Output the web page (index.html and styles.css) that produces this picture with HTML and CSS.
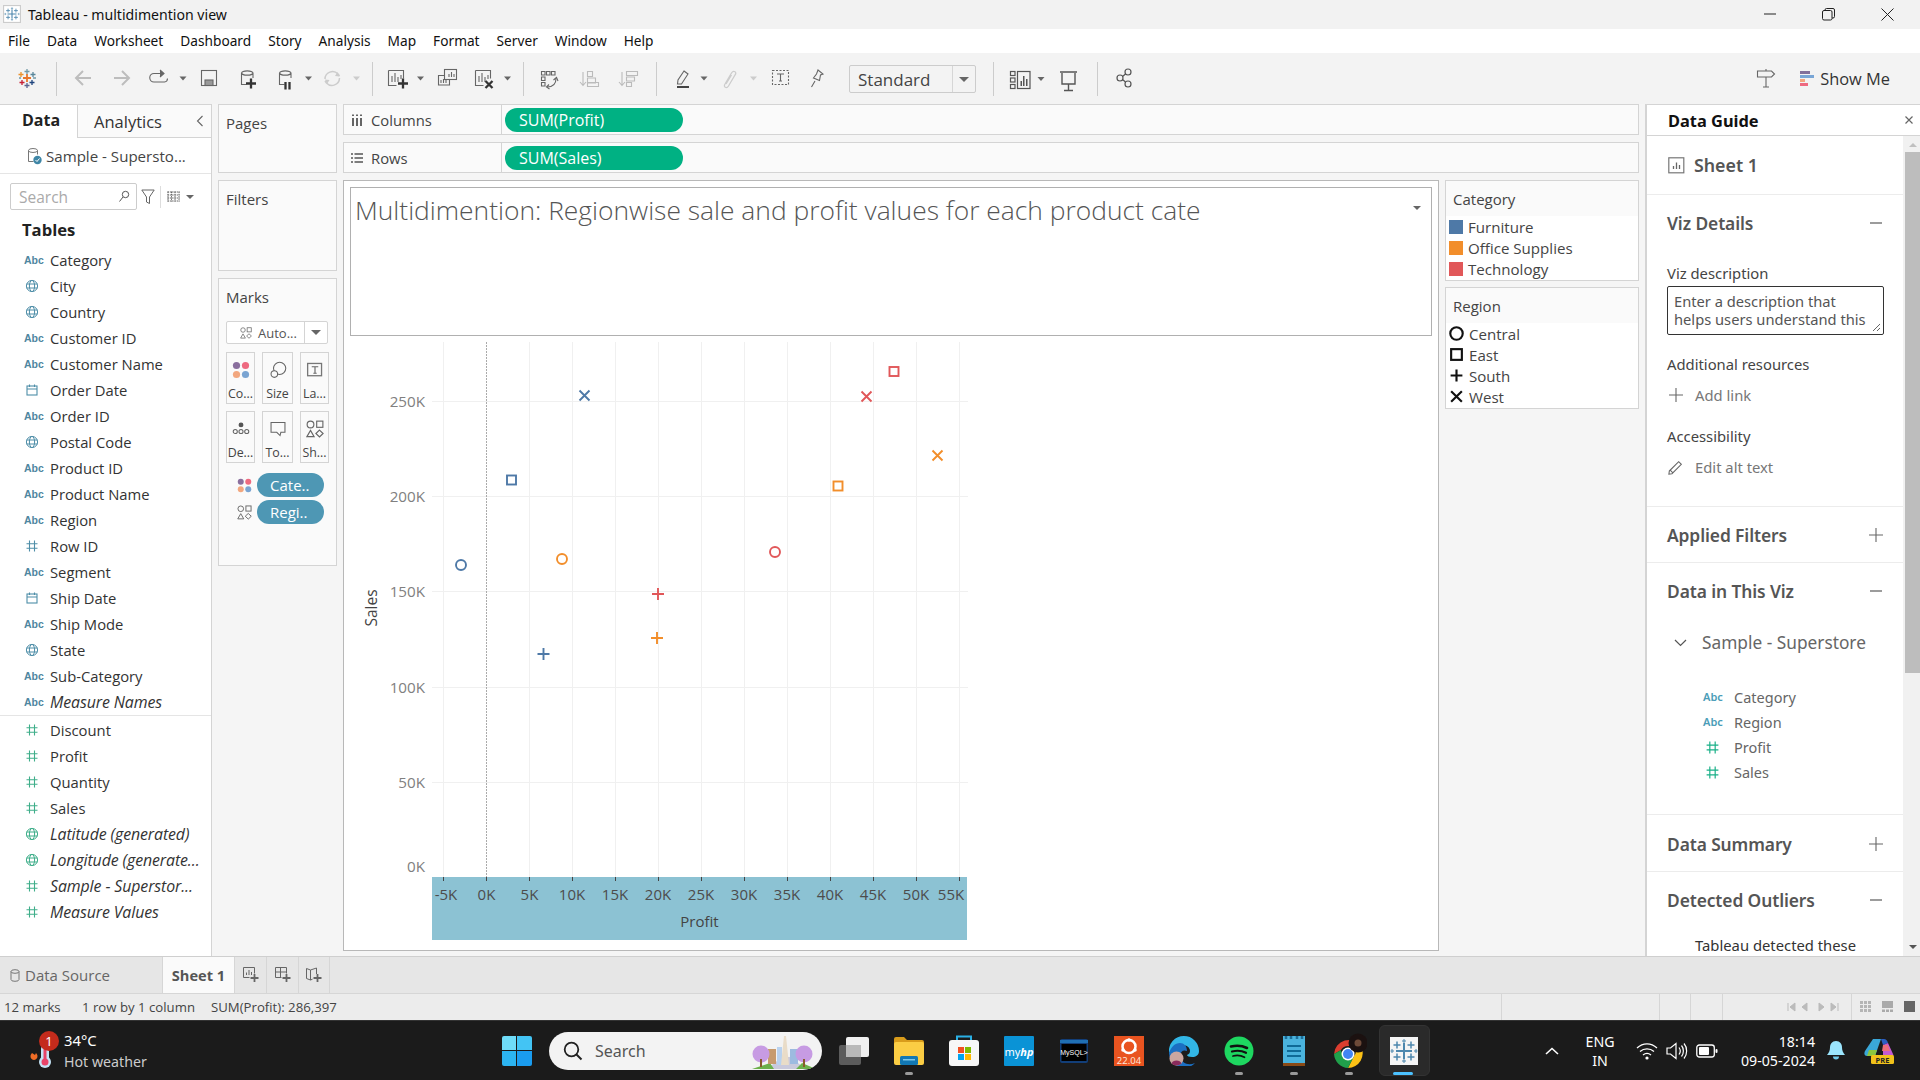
FILE: index.html
```html
<!DOCTYPE html>
<html lang="en">
<head>
<meta charset="utf-8">
<title>Tableau - multidimention view</title>
<link rel="stylesheet" href="styles.css">
</head>
<body>
<svg class="defs" width="0" height="0">
  <symbol id="i-globe" viewBox="0 0 14 14"><g fill="none" stroke="currentColor" stroke-width="1"><circle cx="7" cy="7" r="5.6"/><ellipse cx="7" cy="7" rx="2.6" ry="5.6"/><path d="M1.6 5h10.8M1.6 9h10.8"/></g></symbol>
  <symbol id="i-hash" viewBox="0 0 14 14"><path d="M4.5 1.5v11M9.5 1.5v11M1.5 4.8h11M1.5 9.2h11" fill="none" stroke="currentColor" stroke-width="1.1"/></symbol>
  <symbol id="i-cal" viewBox="0 0 14 14"><g fill="none" stroke="currentColor" stroke-width="1.1"><rect x="2" y="3" width="10" height="9"/><path d="M2 6h10M4.5 1.5V4M9.5 1.5V4"/></g></symbol>
  <symbol id="i-plus" viewBox="0 0 16 16"><path d="M8 1v14M1 8h14" fill="none" stroke="currentColor" stroke-width="1.1"/></symbol>
  <symbol id="i-minus" viewBox="0 0 16 16"><path d="M2 8h12" fill="none" stroke="currentColor" stroke-width="1.3"/></symbol>
  <symbol id="i-colors" viewBox="0 0 16 16"><circle cx="4" cy="4" r="3.2" fill="#8a6f9e"/><circle cx="12" cy="4" r="3.2" fill="#ee6a80"/><circle cx="4" cy="12" r="3.2" fill="#f2a77f"/><circle cx="12" cy="12" r="3.2" fill="#7aa4d2"/></symbol>
  <symbol id="i-shapes" viewBox="0 0 16 16"><g fill="none" stroke="#666" stroke-width="1"><circle cx="4" cy="4" r="3"/><rect x="9.5" y="1" width="5.5" height="5.5"/><path d="M4 9.2l3.2 5.6H.8z"/><path d="M12 9l3.2 3-3.2 3-3.2-3z"/></g></symbol>
  <symbol id="i-tableau" viewBox="0 0 28 28"><g fill="none" stroke="#4d87ad"><path d="M14 6v16M6 14h16" stroke-width="2"/><path d="M7 4.500v7M3.500 8h7M21 4.500v7M17.500 8h7M7 16.500v7M3.500 20h7M21 16.500v7M17.500 20h7" stroke-width="1.500"/><path d="M14 2v4M12 4h4M14 22v4M12 24h4M2 12v4M0.500 14h3.500M26 12v4M24 14h3.500" stroke-width="1"/></g></symbol>
</svg>

<div class="app">
  <header class="titlebar">
    <svg class="tb-logo" width="18" height="18" viewBox="-2 -2 32 32"><rect x="-1" y="-1" width="30" height="30" fill="#fff" stroke="#ccc" stroke-width="2"/><use href="#i-tableau" width="28" height="28"/></svg>
    <span class="tb-title">Tableau - multidimention view</span>
    <div class="win-btns">
      <svg width="12" height="12" viewBox="0 0 12 12"><path d="M0 6h12" stroke="#222" stroke-width="1"/></svg>
      <svg width="13" height="13" viewBox="0 0 13 13"><g fill="none" stroke="#222" stroke-width="1"><rect x="0.500" y="2.500" width="9.500" height="9.500" rx="1.500"/><path d="M3 2.500V2a1.500 1.500 0 0 1 1.500-1.500h6.500a1.500 1.500 0 0 1 1.500 1.500v6.500a1.500 1.500 0 0 1-1.500 1.500H10"/></g></svg>
      <svg width="13" height="13" viewBox="0 0 13 13"><path d="M.5.500l12 12M12.500.500l-12 12" stroke="#222" stroke-width="1"/></svg>
    </div>
  </header>

  <nav class="menubar">
    <span>File</span><span>Data</span><span>Worksheet</span><span>Dashboard</span><span>Story</span><span>Analysis</span><span>Map</span><span>Format</span><span>Server</span><span>Window</span><span>Help</span>
  </nav>

  <div class="toolbar">
    <svg class="tool-a" width="849" height="51" viewBox="0 0 849 51">
      <g stroke-width="1.300" fill="none">
        <path d="M27 16v5M24.500 18.500h5" stroke="#7199a6"/><path d="M27 21v8M23 25h8" stroke="#e8762b" stroke-width="1.800"/><path d="M27 30v5M24.500 32.500h5" stroke="#5b6591"/>
        <path d="M21 19v5M18.500 21.500h5" stroke="#eb912b"/><path d="M33 19v5M30.500 21.500h5" stroke="#59879b"/><path d="M22 27v5M19.500 29.500h5" stroke="#c72035"/><path d="M32 27v5M29.500 29.500h5" stroke="#1f457e"/><path d="M19 25h2M33 25h3" stroke="#7199a6"/>
      </g>
      <path class="sep" d="M56.500 9v34M372.500 9v34M523.500 9v34M656.500 9v34"/>
      <g fill="none" stroke="#bdbdbd" stroke-width="2"><path d="M91 25H76M83 18l-7 7 7 7"/><path d="M114 25h15M122 18l7 7-7 7"/></g>
      <g fill="none" stroke="#666" stroke-width="1.100">
        <path d="M163 20.500h-9a3.500 3.500 0 0 0 0 8.500h10.500a3.500 3.500 0 0 0 3-3.500"/><path d="M160 17l4 3.500-4 3.500" fill="#666"/>
        <rect x="201.500" y="17.500" width="15" height="15"/><rect x="205" y="27" width="8" height="5.500" fill="#999"/>
        <path d="M241.500 20v11.500h5M253 20v5M241.500 20a5.800 2.500 0 0 1 11.500 0 5.800 2.500 0 0 1-11.500 0"/>
        <path d="M279.500 20v11.500h5M291 20v5M279.500 20a5.800 2.500 0 0 1 11.500 0 5.800 2.500 0 0 1-11.500 0"/>
        <path d="M388.500 17.500h15v8M388.500 17.500v15h8M392 29v-6M395 29v-9M398 29v-5M401 26v-4"/>
        <rect x="444.500" y="16.500" width="12" height="10" fill="#f3f3f3"/><path d="M449 24v-3M451.500 24v-5M454 24v-3"/><path d="M444 22.500h-5.500v9.500h11v-5M441 30v-3M443.500 30v-4M446 30v-3"/>
        <path d="M475.500 17.500h15v8M475.500 17.500v15h8M479 29v-6M482 29v-9M485 29v-5M488 26v-4"/>
        <path d="M541.500 18.500h3.500v3.500h-3.500zM546.500 18.500h3.500v3.500h-3.500zM551.500 18.500h3.500v3.500h-3.500zM541.500 24h3.500v3.500h-3.500zM541.500 29.500h3.500v3.500h-3.500zM556 25.500c0 5-3 8.500-9 8.500"/><path d="M553.500 27l3-2.500 1.500 3.500M549 31.500l-2.500 2.500 3 2" />
        <g stroke="#bbb"><path d="M583 19v13M580 29l3 3.500 3-3.500" /><path d="M587.500 18.500h5v5h-5zM587.500 25h8v5h-8zM587.500 29.500h11v4h-11z"/><path d="M622 19v13M619 29l3 3.500 3-3.500"/><path d="M626.500 18.500h11v4h-11zM626.500 24h8v4h-8zM626.500 29.500h5v4h-5z"/></g>
        <path d="M684 18l4 3-6.500 10h-4l.5-4z"/>
        <g stroke="#ccc" stroke-width="1.300"><path d="M735 22l-6.500 11c-2 3-5.500 1-3.500-2l6.500-11c2-3 6-1 3.500 2zM731.500 22l-5.500 9"/></g>
        <rect x="772.500" y="17.500" width="16" height="14" stroke-dasharray="2 1.500"/><path d="M777 21h7M780.500 21v7M779 28h3"/>
        <path d="M811.500 34l3.500-6M818 17l5 4-2.500 1-1 5.500-6-2.500 3-4z"/>
      </g>
      <path d="M179.500 23.500h7l-3.500 4zM305 23.500h7l-3.500 4zM417 23.500h7l-3.500 4zM504 23.500h7l-3.500 4zM700.500 23.500h7l-3.500 4z" fill="#666"/>
      <path d="M353 23.500h7l-3.500 4zM750 23.500h7l-3.500 4z" fill="#ccc"/>
      <g fill="none" stroke="#ccc" stroke-width="1.500"><path d="M325 26a7.500 7.500 0 0 1 13-5l1.500 2M339.500 25a7.500 7.500 0 0 1-13 5l-1.500-2"/></g>
      <path d="M337.500 19l2 4.500-4.500-.5zM327 31l-2-4.500 4.500.500z" fill="#ccc"/>
      <g stroke="#333" stroke-width="2.300" fill="none"><path d="M251 25.500v10M246 30.500h10M398 30.500h10M403 25.500v10"/><path d="M285.500 29v7.500M289.500 29v7.500"/><path d="M485.500 28l7 7M492.500 28l-7 7"/></g>
      <rect x="677" y="33" width="12" height="2" fill="#444"/>
    </svg>
    <div class="std-select"><span class="std-text">Standard</span><span class="std-caret"><i class="caret"></i></span></div>
    <svg class="tool-b" width="164" height="51" viewBox="976 0 164 51">
      <path class="sep" d="M993.500 9v34M1097.500 9v34"/>
      <g fill="none" stroke="#555" stroke-width="1.200">
        <rect x="1010.500" y="18.500" width="4.500" height="4"/><rect x="1010.500" y="25" width="4.500" height="4"/><rect x="1010.500" y="31.500" width="4.500" height="4"/><rect x="1017.500" y="18.500" width="12.500" height="17"/>
        <path d="M1060 19h17M1062 20v11h13V20M1068.500 31v6M1064 37.500h9" stroke-width="1.400"/>
        <circle cx="1128" cy="19" r="3"/><circle cx="1120" cy="25" r="3"/><circle cx="1128" cy="31" r="3"/><path d="M1122.500 23.500l3-2.500M1122.500 26.500l3 2.500"/>
      </g>
      <path d="M1020.500 33v-5h1.500v5zM1023 33v-10h1.500v10zM1026 33v-7h1.500v7z" fill="#555" />
      <path d="M1037.500 24h7l-3.500 4z" fill="#666"/>
    </svg>
    <div class="tool-right">
      <svg width="20" height="20" viewBox="0 0 20 20"><g fill="none" stroke="#666" stroke-width="1.100"><path d="M1.500 3h14l3 3-3 3h-14zM10 1v2M10 9v10M7 19h6"/></g></svg>
      <div class="showme">
        <svg width="14" height="17" viewBox="0 0 14 17"><rect width="10" height="3" y="1" fill="#81709b"/><rect width="14" height="3" y="5" fill="#79a6d6"/><rect width="5" height="3" y="9" fill="#f2a77f"/><rect width="8" height="3" y="13" fill="#ee6a80"/></svg>
        <span>Show Me</span>
      </div>
    </div>
  </div>

  <main class="workspace">
    <aside class="data-pane">
      <div class="pane-tabs">
        <div class="tab-data">Data</div>
        <div class="tab-analytics"><span>Analytics</span><svg width="8" height="12" viewBox="0 0 8 12"><path d="M6.500 1L1.500 6l5 5" fill="none" stroke="#666" stroke-width="1.100"/></svg></div>
      </div>
      <div class="source">
        <svg width="15" height="18" viewBox="0 0 15 18"><g fill="none" stroke="#777" stroke-width="1"><path d="M1.500 3.500v11h5M10.500 3.500v4M1.500 3.500a4.500 2 0 0 1 9 0 4.500 2 0 0 1-9 0"/></g><circle cx="10.500" cy="13" r="4.200" fill="#3f86a6"/><path d="M8.500 13l1.500 1.500 2.500-3" fill="none" stroke="#fff"/></svg>
        <span>Sample - Supersto...</span>
      </div>
      <div class="search-row">
        <div class="search-box"><span>Search</span><svg width="12" height="13" viewBox="0 0 12 13"><g fill="none" stroke="#555"><circle cx="7.500" cy="4.500" r="3.200"/><path d="M5 7l-3.500 4.500"/></g></svg></div>
        <svg class="funnel" width="14" height="16" viewBox="0 0 14 16"><path d="M.8 1h12.400L8.500 8v6.500l-3-1.500V8z" fill="none" stroke="#666"/></svg>
        <i class="v-div"></i>
        <svg width="13" height="12" viewBox="0 0 13 12"><path d="M.5 1h12M.5 4h12M.5 7h12M.5 10h12M1 .5v10M4.500 .5v10M8 .5v10M12 .5v10" stroke="#666" stroke-width="1" stroke-dasharray="1.500 .8"/></svg>
        <i class="caret small"></i>
      </div>
      <h3 class="tables-h">Tables</h3>
      <ul class="fields">
        <li><b class="abc">Abc</b><span>Category</span></li>
        <li><svg class="ic dim"><use href="#i-globe"/></svg><span>City</span></li>
        <li><svg class="ic dim"><use href="#i-globe"/></svg><span>Country</span></li>
        <li><b class="abc">Abc</b><span>Customer ID</span></li>
        <li><b class="abc">Abc</b><span>Customer Name</span></li>
        <li><svg class="ic dim"><use href="#i-cal"/></svg><span>Order Date</span></li>
        <li><b class="abc">Abc</b><span>Order ID</span></li>
        <li><svg class="ic dim"><use href="#i-globe"/></svg><span>Postal Code</span></li>
        <li><b class="abc">Abc</b><span>Product ID</span></li>
        <li><b class="abc">Abc</b><span>Product Name</span></li>
        <li><b class="abc">Abc</b><span>Region</span></li>
        <li><svg class="ic dim"><use href="#i-hash"/></svg><span>Row ID</span></li>
        <li><b class="abc">Abc</b><span>Segment</span></li>
        <li><svg class="ic dim"><use href="#i-cal"/></svg><span>Ship Date</span></li>
        <li><b class="abc">Abc</b><span>Ship Mode</span></li>
        <li><svg class="ic dim"><use href="#i-globe"/></svg><span>State</span></li>
        <li><b class="abc">Abc</b><span>Sub-Category</span></li>
        <li><b class="abc">Abc</b><em>Measure Names</em></li>
      </ul>
      <ul class="fields measures">
        <li><svg class="ic mea"><use href="#i-hash"/></svg><span>Discount</span></li>
        <li><svg class="ic mea"><use href="#i-hash"/></svg><span>Profit</span></li>
        <li><svg class="ic mea"><use href="#i-hash"/></svg><span>Quantity</span></li>
        <li><svg class="ic mea"><use href="#i-hash"/></svg><span>Sales</span></li>
        <li><svg class="ic mea"><use href="#i-globe"/></svg><em>Latitude (generated)</em></li>
        <li><svg class="ic mea"><use href="#i-globe"/></svg><em>Longitude (generate...</em></li>
        <li><svg class="ic mea"><use href="#i-hash"/></svg><em>Sample - Superstor...</em></li>
        <li><svg class="ic mea"><use href="#i-hash"/></svg><em>Measure Values</em></li>
      </ul>
    </aside>

    <section class="cards">
      <div class="card card-pages"><h4>Pages</h4></div>
      <div class="card card-filters"><h4>Filters</h4></div>
      <div class="card card-marks">
        <h4>Marks</h4>
        <div class="mark-type">
          <div class="mark-auto"><svg width="12" height="12"><use href="#i-shapes"/></svg><span>Auto...</span></div>
          <div class="mark-caret"><i class="caret"></i></div>
        </div>
        <div class="mark-grid">
          <div class="mbtn"><svg viewBox="0 0 16 16"><use href="#i-colors"/></svg><span>Co...</span></div>
          <div class="mbtn"><svg viewBox="0 0 22 22"><g fill="none" stroke="#666" stroke-width="1.300"><circle cx="13" cy="9" r="7.500"/><circle cx="6.500" cy="16" r="4" fill="#fafafa"/></g></svg><span>Size</span></div>
          <div class="mbtn"><svg viewBox="0 0 22 22"><rect x="2" y="3" width="17" height="15" fill="none" stroke="#777" stroke-width="1.600"/><path d="M7 7h8M11 7v8M9 15h4" stroke="#666" stroke-width="1.400" fill="none"/></svg><span>La...</span></div>
          <div class="mbtn"><svg viewBox="0 0 22 22"><circle cx="11" cy="6" r="3" fill="#555"/><g fill="none" stroke="#666" stroke-width="1.300"><circle cx="4" cy="14" r="2.500"/><circle cx="11" cy="14" r="2.500"/><circle cx="18" cy="14" r="2.500"/></g></svg><span>De...</span></div>
          <div class="mbtn"><svg viewBox="0 0 22 22"><path d="M2.500 3h17v12h-5l-1 4-4-4h-7z" fill="none" stroke="#666" stroke-width="1.300"/></svg><span>To...</span></div>
          <div class="mbtn"><svg viewBox="0 0 16 16"><use href="#i-shapes"/></svg><span>Sh...</span></div>
        </div>
        <div class="mark-pill"><svg width="15" height="15"><use href="#i-colors"/></svg><span>Cate..</span></div>
        <div class="mark-pill"><svg width="15" height="15"><use href="#i-shapes"/></svg><span>Regi..</span></div>
      </div>
    </section>

    <section class="center">
      <div class="shelf">
        <div class="shelf-label"><svg width="12" height="12" viewBox="0 0 12 12"><path d="M2 4v8M6 4v8M10 4v8M2 .5v1.500M6 .5v1.500M10 .5v1.500" stroke="#555" stroke-width="1.800"/></svg><span>Columns</span></div>
        <div class="pill">SUM(Profit)</div>
      </div>
      <div class="shelf">
        <div class="shelf-label"><svg width="12" height="12" viewBox="0 0 12 12"><path d="M0 2h2M3.500 2H12M0 6h2M3.500 6H12M0 10h2M3.500 10H12" stroke="#555" stroke-width="1.600"/></svg><span>Rows</span></div>
        <div class="pill">SUM(Sales)</div>
      </div>
      <div class="viz-row">
        <div class="viz-sheet">
          <div class="viz-title"><span>Multidimention: Regionwise sale and profit values for each product cate</span><i class="caret small"></i></div>
          <svg class="chart" width="640" height="610" viewBox="345 338 640 610">
            <g class="grid">
              <path d="M443.500 342V877M529.500 342V877M572.500 342V877M615.500 342V877M658.500 342V877M701.500 342V877M744.500 342V877M787.500 342V877M830.500 342V877M873.500 342V877M916.500 342V877M959.500 342V877"/>
              <path d="M432 401.500H968M432 496.500H968M432 591.500H968M432 687.500H968M432 782.500H968"/>
            </g>
            <path d="M486.500 342V877" stroke="#aaa" stroke-dasharray="2 1" fill="none"/>
            <g class="ylab">
              <text x="425" y="407">250K</text><text x="425" y="502">200K</text><text x="425" y="597">150K</text><text x="425" y="693">100K</text><text x="425" y="788">50K</text><text x="425" y="872">0K</text>
            </g>
            <text class="axis-title" transform="translate(377 608) rotate(-90)">Sales</text>
            <rect x="432" y="877" width="535" height="63" fill="#8cc2d3"/>
            <path d="M443.500 877v4M486.500 877v4M529.500 877v4M572.500 877v4M615.500 877v4M658.500 877v4M701.500 877v4M744.500 877v4M787.500 877v4M830.500 877v4M873.500 877v4M916.500 877v4M959.500 877v4" stroke="#444" fill="none"/>
            <g class="xlab">
              <text x="446" y="900">-5K</text><text x="486.500" y="900">0K</text><text x="529.500" y="900">5K</text><text x="572" y="900">10K</text><text x="615" y="900">15K</text><text x="658" y="900">20K</text><text x="701" y="900">25K</text><text x="744" y="900">30K</text><text x="787" y="900">35K</text><text x="830" y="900">40K</text><text x="873" y="900">45K</text><text x="916" y="900">50K</text><text x="951" y="900">55K</text>
            </g>
            <text class="x-title" x="699.500" y="927">Profit</text>
            <g class="mk blue">
              <circle cx="461" cy="565" r="5"/><rect x="507" y="475.500" width="9" height="9"/><path d="M579.500 390.500l10 10M589.500 390.500l-10 10"/><path d="M543.500 648v12M537.500 654h12"/>
            </g>
            <g class="mk orange">
              <circle cx="562" cy="559" r="5"/><rect x="833.500" y="481.500" width="9" height="9"/><path d="M932.500 450.500l10 10M942.500 450.500l-10 10"/><path d="M657 632v12M651 638h12"/>
            </g>
            <g class="mk red">
              <circle cx="775" cy="552" r="5"/><rect x="889.500" y="367" width="9" height="9"/><path d="M861.500 391.500l10 10M871.500 391.500l-10 10"/><path d="M658 588v12M652 594h12"/>
            </g>
          </svg>
        </div>
        <div class="legends">
          <div class="legend">
            <h4>Category</h4>
            <ul>
              <li><i class="sw sw-b"></i>Furniture</li>
              <li><i class="sw sw-o"></i>Office Supplies</li>
              <li><i class="sw sw-r"></i>Technology</li>
            </ul>
          </div>
          <div class="legend">
            <h4>Region</h4>
            <ul>
              <li><svg class="lg-ic" viewBox="0 0 14 14"><circle cx="7" cy="7" r="5.800"/></svg>Central</li>
              <li><svg class="lg-ic" viewBox="0 0 14 14"><rect x="2" y="2" width="10" height="10"/></svg>East</li>
              <li><svg class="lg-ic" viewBox="0 0 14 14"><path d="M7 1.500v11M1.500 7h11"/></svg>South</li>
              <li><svg class="lg-ic" viewBox="0 0 14 14"><path d="M2 2l10 10M12 2L2 12"/></svg>West</li>
            </ul>
          </div>
        </div>
      </div>
    </section>

    <aside class="guide">
      <div class="guide-head"><span>Data Guide</span><svg width="10" height="10" viewBox="0 0 10 10"><path d="M1.500 1.500l7 7M8.500 1.500l-7 7" stroke="#666" stroke-width="1.200"/></svg></div>
      <div class="guide-body">
        <div class="guide-content">
          <div class="g-sheet">
            <svg width="17" height="17" viewBox="0 0 17 17"><rect x=".8" y=".8" width="15" height="15" fill="none" stroke="#777" stroke-width="1.200"/><path d="M5.500 12V9M8.500 12V5.500M11.500 12V8" stroke="#666" stroke-width="1.300"/></svg>
            <span>Sheet 1</span>
          </div>
          <div class="g-sec g-viz">
            <div class="g-head"><h3>Viz Details</h3><svg class="tog"><use href="#i-minus"/></svg></div>
            <div class="g-label first">Viz description</div>
            <div class="g-desc"><span class="g-desc-text">Enter a description that helps users understand this visualization.</span><svg class="grip" width="9" height="9" viewBox="0 0 9 9"><path d="M1 8l7-7M5 8l3-3" stroke="#666" fill="none"/></svg></div>
            <div class="g-label res">Additional resources</div>
            <div class="g-action"><svg class="act-ic"><use href="#i-plus"/></svg><span>Add link</span></div>
            <div class="g-label acc">Accessibility</div>
            <div class="g-action"><svg class="act-ic" viewBox="0 0 18 18"><path d="M1.500 13.500L12 3l3 3L4.500 16.500l-3.500.500zM2.500 12.500l3 3" fill="none" stroke="#666" stroke-width="1.200"/></svg><span>Edit alt text</span></div>
          </div>
          <div class="g-sec g-filters"><div class="g-head"><h3>Applied Filters</h3><svg class="tog"><use href="#i-plus"/></svg></div></div>
          <div class="g-sec g-data">
            <div class="g-head"><h3>Data in This Viz</h3><svg class="tog"><use href="#i-minus"/></svg></div>
            <div class="g-source"><svg width="13" height="8" viewBox="0 0 13 8"><path d="M1 1l5.500 5.500L12 1" fill="none" stroke="#555" stroke-width="1.200"/></svg><span>Sample - Superstore</span></div>
            <ul class="g-fields">
              <li><b class="abc2">Abc</b>Category</li>
              <li><b class="abc2">Abc</b>Region</li>
              <li><svg class="hash2"><use href="#i-hash"/></svg>Profit</li>
              <li><svg class="hash2"><use href="#i-hash"/></svg>Sales</li>
            </ul>
          </div>
          <div class="g-sec g-summary"><div class="g-head"><h3>Data Summary</h3><svg class="tog"><use href="#i-plus"/></svg></div></div>
          <div class="g-sec g-outliers">
            <div class="g-head"><h3>Detected Outliers</h3><svg class="tog"><use href="#i-minus"/></svg></div>
            <p>Tableau detected these</p>
          </div>
        </div>
        <div class="scrollbar">
          <i class="sb-up"></i><div class="sb-thumb"></div><i class="sb-down"></i>
        </div>
      </div>
    </aside>
  </main>

  <div class="sheet-tabs">
    <div class="ds-tab"><svg width="10" height="13" viewBox="0 0 10 13"><path d="M1 2.500v8a4 1.800 0 0 0 8 0v-8a4 1.800 0 0 0-8 0 4 1.800 0 0 0 8 0" fill="none" stroke="#777"/></svg><span>Data Source</span></div>
    <div class="sheet-tab">Sheet 1</div>
    <div class="new-tab"><svg width="16" height="16" viewBox="0 0 16 16"><g fill="none" stroke="#666"><path d="M.5.500h11v6M.5.500v10h6M3.500 8V5.500M6 8V3M8.500 8V5"/><path d="M11.500 7v8M7.500 11h8" stroke-width="1.800"/></g></svg></div>
    <div class="new-tab"><svg width="16" height="16" viewBox="0 0 16 16"><g fill="none" stroke="#666"><path d="M.5.500h11v6M.5.500v10h6M.5 5h11M5.500.500v10"/><path d="M11.500 7v8M7.500 11h8" stroke-width="1.800"/></g></svg></div>
    <div class="new-tab"><svg width="16" height="16" viewBox="0 0 16 16"><g fill="none" stroke="#666"><path d="M.5 1.500l4 1.500 6-2v6M.5 1.500v10l4 1.500 2-.8M4.500 3v10"/><path d="M11.500 7v8M7.500 11h8" stroke-width="1.800"/></g></svg></div>
  </div>

  <div class="statusbar">
    <span class="st-a">12 marks</span><span class="st-b">1 row by 1 column</span><span class="st-c">SUM(Profit): 286,397</span>
    <div class="st-cells"><i class="c1"></i><i class="c2"></i><i class="c3"></i><i class="c4"></i></div>
    <svg class="st-nav" width="60" height="12" viewBox="0 0 60 12"><path d="M3 2v8M10 2L5 6l5 4zM22 2l-5 4 5 4zM34 2l5 4-5 4zM46 2l5 4-5 4zM53 2v8" stroke="#bbb" fill="#bbb"/></svg>
    <i class="st-vdiv"></i>
    <svg class="st-views" width="60" height="12" viewBox="0 0 60 12"><path d="M0 0h3v3H0zM4 0h3v3H4zM8 0h3v3H8zM0 4h3v3H0zM4 4h3v3H4zM8 4h3v3H8zM0 8h3v3H0zM4 8h3v3H4zM8 8h3v3H8z" fill="#b5b5b5"/><path d="M22 0h11v7H22zM22 8.500h3V11h-3zM26 8.500h3V11h-3zM30 8.500h3V11h-3z" fill="#aaa"/><rect x="44" y="0" width="11" height="11" fill="#666"/></svg>
  </div>

  <footer class="taskbar">
    <div class="weather">
      <svg class="w-ic" width="36" height="40" viewBox="0 0 36 40"><path d="M5 22c-3 3-1 7 2 7s5-4 2-7l-1 2z" fill="#ef6c26"/><rect x="14" y="14" width="8" height="20" rx="4" fill="#c5e4f7"/><circle cx="18" cy="31" r="6" fill="#c5e4f7"/><circle cx="18" cy="31" r="3.500" fill="#e8446a"/><rect x="16.500" y="18" width="3" height="12" fill="#e8446a"/><circle cx="22" cy="10" r="10" fill="#c42b1c"/><text x="22" y="14.500" class="w-badge">1</text></svg>
      <div class="w-text"><span class="w-temp">34°C</span><span class="w-desc">Hot weather</span></div>
    </div>
    <div class="tk-app"><svg width="30" height="30" viewBox="0 0 30 30"><path d="M0 2a2 2 0 0 1 2-2h12v14H0z" fill="#6fdcf8"/><path d="M15 0h13a2 2 0 0 1 2 2v12H15z" fill="#43c4f4"/><path d="M0 15h14v15H2a2 2 0 0 1-2-2z" fill="#2cb4f1"/><path d="M15 15h15v13a2 2 0 0 1-2 2H15z" fill="#1a9cef"/></svg></div>
    <div class="tk-search">
      <svg width="20" height="20" viewBox="0 0 20 20"><circle cx="8.500" cy="8.500" r="6.800" fill="none" stroke="#222" stroke-width="1.800"/><path d="M13.500 13.500l5 5" stroke="#222" stroke-width="2"/></svg>
      <span>Search</span>
      <svg class="tk-art" width="66" height="34" viewBox="0 0 66 34"><path d="M15 34L30 22h8l16 12z" fill="#c9c9dc"/><path d="M0 34l18-6 4 6zM44 34l6-6 14 6z" fill="#6cb04a"/><rect x="16" y="14" width="8" height="15" fill="#c79b6f"/><rect x="38" y="14" width="8" height="15" fill="#9dbbe0"/><rect x="25" y="12" width="5" height="18" fill="#b9d2ef"/><path d="M29 30l3-29h2l3 29z" fill="#e9dcc8"/><circle cx="9" cy="19" r="8.500" fill="#c79be3"/><circle cx="52" cy="19" r="8.500" fill="#c79be3"/><rect x="8" y="24" width="2" height="8" fill="#8a5a2b"/><rect x="51" y="24" width="2" height="8" fill="#8a5a2b"/></svg>
    </div>
    <div class="tk-apps">
      <div class="tk-app"><svg width="30" height="28" viewBox="0 0 30 28"><rect x="0" y="8" width="22" height="20" rx="2" fill="#5c5c5c"/><rect x="7" y="0" width="23" height="20" rx="2" fill="#f0f0f0"/><rect x="7" y="8" width="15" height="12" fill="#b9b9b9"/></svg></div>
      <div class="tk-app run"><svg width="30" height="28" viewBox="0 0 30 28"><path d="M0 2a2 2 0 0 1 2-2h8l3 3h15a2 2 0 0 1 2 2v3H0z" fill="#d99c1b"/><rect y="5" width="30" height="23" rx="2" fill="#fbcd44"/><rect x="6" y="19" width="18" height="9" rx="1.500" fill="#1278b4"/><rect x="9" y="22" width="12" height="1.500" fill="#7cc7ea"/></svg></div>
      <div class="tk-app"><svg width="30" height="31" viewBox="0 0 30 31"><path d="M8 7V1.500h14V7" fill="none" stroke="#2ab0e5" stroke-width="2"/><rect y="5" width="30" height="26" rx="3" fill="#f7f7f7"/><rect x="9" y="12" width="6" height="6" fill="#f25022"/><rect x="16" y="12" width="6" height="6" fill="#7fba00"/><rect x="9" y="19" width="6" height="6" fill="#00a4ef"/><rect x="16" y="19" width="6" height="6" fill="#ffb900"/></svg></div>
      <div class="tk-app"><svg width="30" height="30" viewBox="0 0 30 30"><rect width="30" height="30" rx="1" fill="#0a93d6"/><text x="15" y="19.500" class="ic-hp">my<tspan font-style="italic" font-weight="700">hp</tspan></text></svg></div>
      <div class="tk-app"><svg width="28" height="24" viewBox="0 0 28 24"><rect width="28" height="24" rx="2" fill="#123e78"/><rect y="1" width="28" height="3" fill="#1f6fb3"/><rect x="1.500" y="5" width="25" height="17" fill="#000"/><text x="14" y="16" class="ic-sql">MySQL&gt;</text></svg></div>
      <div class="tk-app"><svg width="30" height="30" viewBox="0 0 30 30"><rect width="30" height="30" fill="#e95420"/><circle cx="15" cy="10.500" r="6.500" fill="none" stroke="#fff" stroke-width="2.500"/><circle cx="15" cy="4" r="1.800" fill="#fff"/><circle cx="9" cy="14" r="1.800" fill="#fff"/><circle cx="21" cy="14" r="1.800" fill="#fff"/><text x="15" y="28" class="ic-ub">22.04</text></svg></div>
      <div class="tk-app"><svg width="30" height="30" viewBox="0 0 30 30"><path d="M15 0a15 15 0 0 1 15 15c0 4-3 6-7 6-3 0-5-1-5-2 2-1 3-2 3-4 0-4-4-6-8-6-6 0-10 4-13 8A15 15 0 0 1 15 0z" fill="#32b6e6"/><path d="M0 17c2-6 6-10 11-10 4 0 7 3 7 8-4-2-8 1-6 7 1 5 7 8 14 5a15 15 0 0 1-26-10z" fill="#1b6fc2"/><circle cx="7.500" cy="22.500" r="7" fill="#caa6a0"/><path d="M2.500 27.500c1-4 9-4 10 0a7 7 0 0 1-10 0z" fill="#8a2b5c"/></svg></div>
      <div class="tk-app run"><svg width="30" height="30" viewBox="0 0 30 30"><circle cx="15" cy="15" r="14.500" fill="#1ed760"/><g fill="none" stroke="#111" stroke-linecap="round"><path d="M7 10.500c6-1.500 11-1 16 1.500" stroke-width="2.600"/><path d="M8 15.500c5-1.300 10-.8 14 1.300" stroke-width="2.200"/><path d="M9 20c4-1 8-.6 11.500 1.200" stroke-width="1.800"/></g></svg></div>
      <div class="tk-app run"><svg width="22" height="30" viewBox="0 0 22 30"><rect width="22" height="30" fill="#4ab3dd"/><rect y="27" width="22" height="3" fill="#8a4a16"/><path d="M4 10h14M4 15h14M4 20h14" stroke="#0f6a96" stroke-width="2"/><path d="M3 0v3M8 0v3M14 0v3M19 0v3" stroke="#1c6e99" stroke-width="2.500"/></svg></div>
      <div class="tk-app run"><svg width="36" height="36" viewBox="0 0 36 36"><path d="M3 21a15 15 0 0 1 27-8H17a8 8 0 0 0-7 4z" fill="#db3d2f"/><path d="M30 13a15 15 0 0 1-13 22l6-12a8 8 0 0 0 0-10z" fill="#fbc116"/><path d="M3 21a15 15 0 0 0 14 14l6-12a8 8 0 0 1-13-6z" fill="#20a04b"/><circle cx="17" cy="21" r="6.500" fill="#fff"/><circle cx="17" cy="21" r="5" fill="#4285f4"/><circle cx="27" cy="10" r="9.500" fill="#1b1110"/><circle cx="27" cy="10" r="3.500" fill="#6e4a38"/></svg></div>
      <div class="tk-app active"><svg width="28" height="28" viewBox="0 0 28 28"><rect width="28" height="28" fill="#f5f5f5"/><use href="#i-tableau" width="28" height="28"/></svg></div>
    </div>
    <div class="tray">
      <svg class="tr-chev" width="14" height="8" viewBox="0 0 14 8"><path d="M1 7l6-5.500L13 7" fill="none" stroke="#fff" stroke-width="1.600"/></svg>
      <div class="tr-lang"><span>ENG</span><span>IN</span></div>
      <svg class="tr-ic" width="22" height="18" viewBox="0 0 22 18"><g fill="none" stroke="#fff" stroke-width="1.300"><path d="M1 6c6-5.500 14-5.500 20 0M4 9.500c4-3.500 10-3.500 14 0M7 13c2.500-2 5.500-2 8 0"/></g><circle cx="11" cy="16" r="1.600" fill="#fff"/></svg>
      <svg class="tr-ic" width="22" height="18" viewBox="0 0 22 18"><g fill="none" stroke="#fff" stroke-width="1.200"><path d="M1 6h3.500L10 1.500v15L4.500 12H1zM13 5.500c1.500 2 1.500 5 0 7M15.500 3.500c2.500 3 2.500 8 0 11M18 1.500c3.500 4 3.500 11 0 15"/></g></svg>
      <svg class="tr-ic" width="22" height="14" viewBox="0 0 22 14"><rect x=".8" y="1" width="17.500" height="12" rx="2.500" fill="none" stroke="#fff" stroke-width="1.300"/><rect x="3" y="3" width="10" height="8" rx="1" fill="#fff"/><rect x="19.500" y="5" width="2" height="4" rx="1" fill="#fff"/></svg>
      <div class="tr-clock"><span>18:14</span><span>09-05-2024</span></div>
      <svg class="tr-bell" width="18" height="20" viewBox="0 0 18 20"><path d="M9 0c4 0 6 3 6 6.500 0 3 1 5 3 7.500H0c2-2.500 3-4.500 3-7.500C3 3 5 0 9 0z" fill="#9be5fd"/><path d="M6 15.500h6a3 3 0 0 1-6 0z" fill="#6fc9ea"/></svg>
      <svg class="tr-cop" width="30" height="26" viewBox="0 0 30 26"><path d="M9 1h8l-6 17H3C0 18 0 15 1 13z" fill="#3aa7d8"/><path d="M17 1h3c2 0 3 1 4 4l-5 2z" fill="#2b5ec2"/><path d="M3 18h8l2-6-8 0z" fill="#8cc63f"/><path d="M19 7l5-2 5 11c1 2 0 3-2 3h-8z" fill="#c45ad0"/><path d="M19 7l5 0 2 6h-8z" fill="#ec6f7a"/><rect x="7" y="17" width="23" height="9" rx="1.500" fill="#f2c21a"/><text x="18.500" y="24.500" class="ic-pre">PRE</text></svg>
    </div>
  </footer>
</div>
</body>
</html>
```

FILE: styles.css
```css
* { box-sizing: border-box; }
html, body { margin: 0; padding: 0; }
body { width: 1920px; height: 1080px; overflow: hidden; font-family: "Open Sans", "Noto Sans", sans-serif; color: #333; background: #f5f5f5; }
ul { list-style: none; margin: 0; padding: 0; }
h3, h4, p { margin: 0; font-weight: 400; }
i { font-style: normal; display: block; }
svg { display: block; flex: none; }
.defs { position: absolute; }
.app { display: flex; flex-direction: column; height: 1080px; }

/* title + menu */
.titlebar { height: 29px; background: #f2f2f2; display: flex; align-items: center; padding-left: 3px; }
.tb-title { margin-left: 7px; font-family: "Noto Sans", sans-serif; font-size: 14.1px; color: #111; }
.win-btns { margin-left: auto; display: flex; align-items: center; gap: 46px; padding-right: 26px; }
.menubar { height: 25px; background: #fff; display: flex; align-items: center; gap: 17px; padding-left: 8px; font-family: "Noto Sans", sans-serif; font-size: 13.7px; color: #111; }

/* toolbar */
.toolbar { height: 51px; background: #f3f3f3; display: flex; align-items: flex-start; }
.sep { stroke: #ccc; fill: none; }
.caret { width: 0; height: 0; border-left: 5px solid transparent; border-right: 5px solid transparent; border-top: 5px solid #666; }
.caret.small { border-left-width: 4px; border-right-width: 4px; border-top-width: 4px; margin-left: 6px; }
.std-select { width: 127px; height: 28px; margin-top: 12px; display: flex; border: 1px solid #ccc; border-radius: 2px; background: #f3f3f3; }
.std-text { flex: 1; padding-left: 8px; font-size: 17px; line-height: 27px; color: #444; border-right: 1px solid #d6d6d6; }
.std-caret { width: 22px; display: flex; align-items: center; justify-content: center; }
.tool-right { margin-left: auto; display: flex; align-items: center; height: 51px; padding-right: 30px; padding-bottom: 1px; }
.showme { display: flex; align-items: center; gap: 6px; margin-left: 24px; font-size: 16.4px; color: #333; }

/* workspace */
.workspace { height: 852px; display: flex; background: #f5f5f5; }

/* data pane */
.data-pane { width: 212px; background: #fff; border-right: 1px solid #d4d4d4; border-top: 1px solid #d4d4d4; }
.pane-tabs { height: 33px; display: flex; }
.tab-data { width: 77px; padding-left: 22px; font-weight: 700; font-size: 16px; line-height: 30px; color: #222; }
.tab-analytics { flex: 1; display: flex; align-items: center; justify-content: space-between; padding: 0 7px 0 16px; font-size: 16.5px; color: #333; background: #fafafa; border-left: 1px solid #d4d4d4; border-bottom: 1px solid #d4d4d4; }
.source { height: 36px; display: flex; align-items: center; gap: 4px; padding-left: 27px; border-bottom: 1px solid #e5e5e5; font-size: 15.100px; color: #444; }
.search-row { height: 27px; margin-top: 9px; display: flex; align-items: center; padding-left: 10px; }
.search-box { width: 127px; height: 27px; display: flex; align-items: center; justify-content: space-between; padding: 0 6px 0 8px; border: 1px solid #ccc; border-radius: 2px; font-size: 15.500px; color: #aaa; }
.funnel { margin-left: 4px; }
.v-div { width: 1px; height: 22px; background: #ddd; margin: 0 6px 0 5px; }
.tables-h { height: 37px; padding: 5px 0 0 22px; font-weight: 700; font-size: 16.6px; line-height: 30px; color: #222; }
.fields { padding-left: 18px; border-bottom: 1px solid #e5e5e5; }
.fields.measures { border-bottom: 0; margin-top: 1px; }
.fields li { height: 26px; display: flex; align-items: center; font-size: 14.800px; color: #333; white-space: nowrap; }
.fields em { font-style: italic; font-size: 15.900px; letter-spacing: -.1px; }
.abc { width: 32px; padding-left: 6px; font-size: 10.5px; font-weight: 600; color: #4e86a0; font-family: "Liberation Sans", sans-serif; }
.ic { width: 14px; height: 14px; margin: 0 11px 0 7px; }
.dim { color: #4e8ea8; }
.mea { color: #3fae8a; }

/* cards */
.cards { width: 119px; margin-left: 6px; display: flex; flex-direction: column; gap: 7px; }
.card { background: #fafafa; border: 1px solid #d4d4d4; padding: 8px 7px; }
.card h4 { font-size: 15px; line-height: 20px; color: #444; }
.card-pages { height: 69px; }
.card-filters { height: 91px; }
.card-marks { height: 288px; }
.mark-type { height: 23px; margin-top: 14px; display: flex; border: 1px solid #d4d4d4; border-radius: 2px; background: #fff; width: 102px; }
.mark-auto { flex: 1; display: flex; align-items: center; gap: 6px; padding-left: 13px; font-size: 13px; color: #555; border-right: 1px solid #d4d4d4; }
.mark-caret { width: 22px; display: flex; align-items: center; justify-content: center; }
.mark-grid { margin-top: 8px; width: 103px; display: grid; grid-template-columns: 29px 31px 29px; column-gap: 7px; row-gap: 7px; }
.mbtn { height: 52px; border: 1px solid #d4d4d4; background: #fafafa; display: flex; flex-direction: column; align-items: center; padding-top: 8px; gap: 6px; font-size: 12.4px; color: #444; }
.mbtn svg { width: 18px; height: 18px; }
.mark-pill { display: flex; align-items: center; height: 24px; margin-top: 3px; gap: 5px; padding-left: 11px; }
.mark-grid + .mark-pill { margin-top: 10px; }
.mark-pill span { width: 67px; height: 24px; border-radius: 12px; background: #4e97b4; color: #fff; font-size: 15px; line-height: 24px; padding-left: 13px; }

/* center */
.center { width: 1296px; margin-left: 6px; display: flex; flex-direction: column; }
.shelf { height: 31px; margin-bottom: 7px; display: flex; align-items: center; background: #fafafa; border: 1px solid #d4d4d4; }
.shelf-label { width: 158px; height: 100%; display: flex; align-items: center; gap: 8px; padding: 1px 0 0 7px; border-right: 1px solid #d4d4d4; font-size: 14.800px; color: #444; }
.pill { width: 178px; height: 24px; margin: 1px 0 0 3px; border-radius: 12px; background: #00b183; color: #fff; padding-left: 14px; font-size: 16px; line-height: 24px; }
.viz-row { display: flex; gap: 6px; }
.viz-sheet { width: 1096px; height: 771px; background: #fff; border: 1px solid #b8b8b8; padding: 6px 6px 0 6px; }
.viz-title { height: 149px; border: 1px solid #b0b0b0; display: flex; justify-content: space-between; padding: 4px 10px 0 4px; font-size: 26.400px; font-weight: 300; line-height: 36px; color: #555; }
.viz-title .caret { margin-top: 14px; }
.chart { margin-left: -5px; margin-top: 2px; }
.grid path { stroke: #f0f0f0; fill: none; }
.ylab text { font-size: 15.2px; fill: #808080; text-anchor: end; }
.axis-title { font-size: 15.500px; fill: #444; text-anchor: middle; }
.xlab text { font-size: 15px; fill: #4c4c4c; text-anchor: middle; }
.x-title { font-size: 15px; font-weight: 500; fill: #444; text-anchor: middle; }
.mk { fill: none; stroke-width: 1.900; }
.mk.blue { stroke: #4e79a7; }
.mk.orange { stroke: #f28e2b; }
.mk.red { stroke: #e15759; }

/* legends */
.legends { width: 194px; display: flex; flex-direction: column; gap: 6px; }
.legend { background: #fff; border: 1px solid #d4d4d4; padding-bottom: 1px; }
.legend h4 { height: 35px; background: #fafafa; padding-left: 7px; font-size: 15px; line-height: 36px; color: #444; }
.legend li { height: 21px; display: flex; align-items: center; gap: 5px; padding-left: 3px; font-size: 15.100px; color: #444; }
.sw { width: 14px; height: 14px; }
.sw-b { background: #4e79a7; }
.sw-o { background: #f28e2b; }
.sw-r { background: #e15759; }
.lg-ic { width: 15px; height: 15px; fill: none; stroke: #111; stroke-width: 2; }

/* guide */
.guide { width: 275px; margin-left: 6px; background: #fff; border-left: 2px solid #d4d4d4; border-top: 1px solid #d4d4d4; display: flex; flex-direction: column; }
.guide-head { height: 31px; flex: none; display: flex; align-items: center; justify-content: space-between; padding: 0 6px 0 21px; border-bottom: 1px solid #d4d4d4; font-family: "Noto Sans", sans-serif; font-weight: 700; font-size: 16.4px; color: #111; }
.guide-body { flex: 1; display: flex; min-height: 0; }
.guide-content { width: 257px; overflow: hidden; font-family: "Noto Sans", sans-serif; }
.g-sheet { height: 59px; display: flex; align-items: center; gap: 9px; padding-left: 21px; border-bottom: 1px solid #ececec; font-size: 17.8px; font-weight: 600; color: #555; }
.g-sec { padding-left: 20px; border-bottom: 1px solid #ececec; }
.g-head { display: flex; align-items: center; justify-content: space-between; height: 24px; padding-right: 19px; }
.g-head h3 { font-size: 17.4px; font-weight: 600; color: #555; letter-spacing: -.1px; }
.tog { width: 16px; height: 16px; color: #666; }
.g-viz { height: 312px; padding-top: 16px; }
.g-label { font-size: 14.800px; color: #444; line-height: 20px; }
.g-label.first { margin-top: 28px; }
.g-desc { position: relative; width: 217px; height: 49px; margin-top: 3px; padding: 5px 14px 0 6px; border: 1px solid #333; border-radius: 2px; font-size: 14.700px; line-height: 18px; color: #555; }
.g-desc-text { display: block; height: 40px; overflow: hidden; }
.grip { position: absolute; right: 2px; bottom: 2px; }
.g-label.res { margin-top: 19px; }
.g-label.acc { margin-top: 21px; }
.g-action { display: flex; align-items: center; gap: 11px; margin-top: 11px; font-size: 14.800px; line-height: 20px; color: #777; padding-left: 1px; }
.act-ic { width: 16px; height: 16px; color: #666; }
.g-filters { height: 56px; padding-top: 16px; }
.g-data { height: 252px; padding-top: 16px; }
.g-source { display: flex; align-items: center; gap: 15px; padding-left: 7px; margin-top: 28px; font-size: 17.300px; line-height: 24px; color: #666; }
.g-fields { margin-top: 29px; padding-left: 36px; }
.g-fields li { height: 25.100px; display: flex; align-items: center; font-size: 14.500px; color: #666; }
.abc2 { width: 31px; font-size: 11px; font-weight: 600; color: #4b9db8; font-family: "Noto Sans", sans-serif; }
.hash2 { width: 15px; height: 15px; margin: 0 14px 0 2px; color: #19b088; }
.g-summary { height: 57px; padding-top: 17px; }
.g-outliers { height: 90px; padding-top: 16px; border-bottom: 0; }
.g-outliers p { margin: 23px 0 0 28px; font-size: 14.800px; line-height: 20px; color: #333; }
.scrollbar { width: 17px; background: #f1f1f1; display: flex; flex-direction: column; align-items: center; padding-left: 2px; }
.sb-up { width: 0; height: 0; margin: 7px 0 5px; border-left: 4px solid transparent; border-right: 4px solid transparent; border-bottom: 4px solid #c0c0c0; }
.sb-thumb { width: 15px; height: 521px; background: #bdbdbd; }
.sb-down { width: 0; height: 0; margin-top: auto; margin-bottom: 7px; border-left: 4px solid transparent; border-right: 4px solid transparent; border-top: 4px solid #555; }

/* tabs */
.sheet-tabs { height: 38px; display: flex; background: #e6e6e6; border-top: 1px solid #cfcfcf; border-bottom: 1px solid #d6d6d6; }
.ds-tab { width: 163px; display: flex; align-items: center; gap: 5px; padding-left: 10px; font-size: 15px; color: #666; border-right: 1px solid #d6d6d6; }
.sheet-tab { width: 71px; background: #fafafa; text-align: center; font-weight: 700; font-size: 14.600px; line-height: 36px; color: #555; }
.new-tab { width: 32px; display: flex; align-items: center; justify-content: center; border-left: 1px solid #d6d6d6; }
.new-tab:last-child { border-right: 1px solid #d6d6d6; }

/* status */
.statusbar { height: 26px; background: #ececec; display: flex; align-items: center; font-size: 13.2px; color: #444; }
.st-a { width: 82px; padding-left: 4px; }
.st-b { width: 129px; }
.st-c { width: 160px; }
.st-cells { margin-left: 1130px; display: flex; height: 100%; }
.st-cells i { border-left: 1px solid #d6d6d6; height: 100%; }
.c1 { width: 158px; }
.c2 { width: 31px; }
.c3 { width: 32px; }
.c4 { width: 57px; }
.st-nav { margin-left: 6px; }
.st-vdiv { width: 1px; height: 100%; background: #d6d6d6; margin-left: 6px; }
.st-views { margin-left: 8px; }

/* taskbar */
.taskbar { height: 60px; background: #1b1b1b; border-top: 1px solid #333; display: flex; align-items: center; }
.weather { width: 489px; display: flex; align-items: center; padding-left: 27px; }
.w-badge { font-size: 13px; fill: #fff; text-anchor: middle; font-family: "Noto Sans", sans-serif; }
.w-text { display: flex; flex-direction: column; margin-left: 1px; font-family: "Noto Sans", sans-serif; font-size: 14.2px; line-height: 22px; }
.w-temp { color: #fff; font-size: 14.800px; }
.w-desc { color: #ccc; }
.tk-app { position: relative; width: 55px; height: 59px; flex: none; display: flex; align-items: center; justify-content: center; }
.tk-app.run::after { content: ""; position: absolute; left: 24px; bottom: 5px; width: 8px; height: 3px; border-radius: 2px; background: #9a9a9a; }
.tk-app.active::before { content: ""; position: absolute; left: 3px; top: 4px; width: 49px; height: 49px; border-radius: 6px; background: #2a2a2a; border: 1px solid #333; }
.tk-app.active svg { position: relative; }
.tk-app.active::after { content: ""; position: absolute; left: 17px; bottom: 5px; width: 20px; height: 3px; border-radius: 2px; background: #4cc2ff; }
.tk-search { position: relative; width: 273px; height: 38px; margin: 0 4px 0 5px; border-radius: 19px; background: #f3f3f3; display: flex; align-items: center; gap: 12px; padding-left: 14px; font-family: "Noto Sans", sans-serif; font-size: 16px; color: #555; overflow: hidden; }
.tk-art { position: absolute; right: 4px; bottom: 1px; }
.tk-apps { display: flex; }
.ic-hp { font-size: 11px; fill: #fff; text-anchor: middle; font-family: "Noto Sans", sans-serif; }
.ic-sql { font-size: 7px; fill: #fff; text-anchor: middle; font-family: "Liberation Sans", sans-serif; }
.ic-ub { font-size: 9.500px; fill: #fde3d8; text-anchor: middle; font-family: "Noto Sans", sans-serif; }
.ic-pre { font-size: 7.500px; font-weight: 700; fill: #222; text-anchor: middle; font-family: "Noto Sans", sans-serif; }
.tray { margin-left: auto; display: flex; align-items: center; padding-right: 26px; font-family: "Noto Sans", sans-serif; color: #fff; font-size: 14.2px; }
.tr-chev { margin-right: 16px; }
.tr-lang { width: 50px; display: flex; flex-direction: column; align-items: center; line-height: 19px; margin-right: 7px; }
.tr-ic { margin: 0 4px; }
.tr-clock { width: 93px; display: flex; flex-direction: column; align-items: flex-end; line-height: 19px; }
.tr-bell { margin: 0 19px 0 12px; }
```
